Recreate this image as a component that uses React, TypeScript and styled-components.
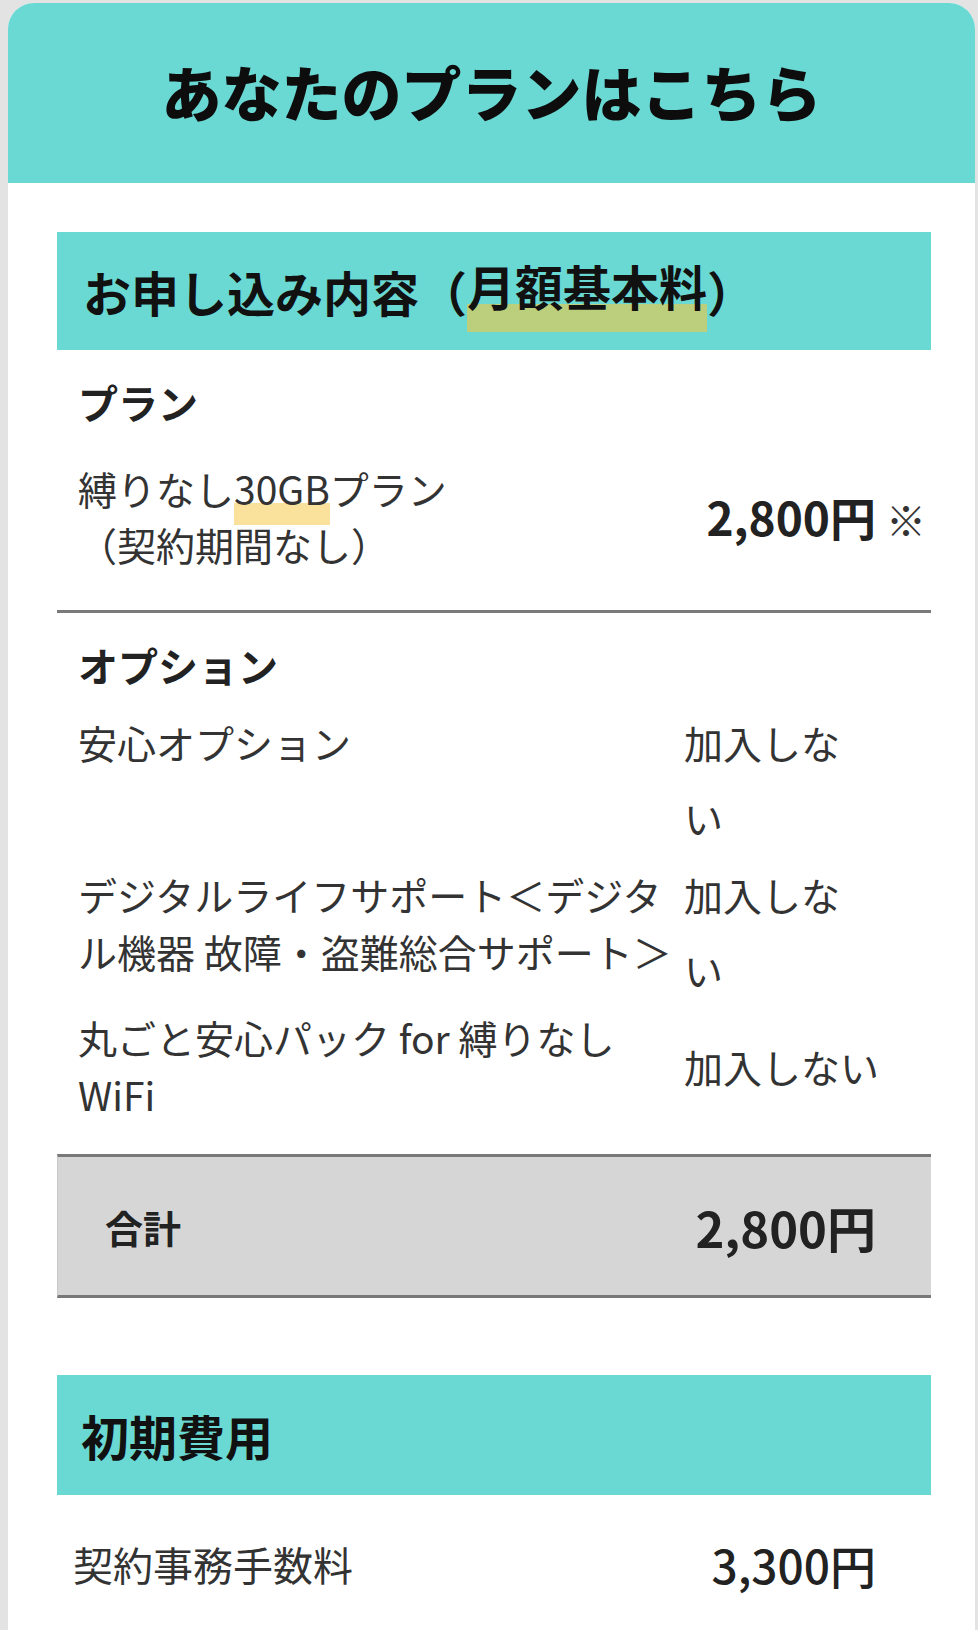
import styled, { createGlobalStyle } from "styled-components";

const GlobalStyle = createGlobalStyle`
  html, body {
    margin: 0;
    padding: 0;
    background: #e3e3e3;
  }
  body {
    font-family: "Noto Sans CJK JP", "Noto Sans", sans-serif;
    color: #1e1e1e;
  }
`;

const TEAL = "#6ad9d4";

const options = [
  { name: "安心オプション", value: "加入しない", narrow: true, center: false },
  {
    name: "デジタルライフサポート＜デジタル機器 故障・盗難総合サポート＞",
    value: "加入しない",
    narrow: true,
    center: false,
  },
  { name: "丸ごと安心パック for 縛りなしWiFi", value: "加入しない", narrow: false, center: true },
];

function App() {
  return (
    <>
      <GlobalStyle />
      <Card>
        <Hero>
          <h1>あなたのプランはこちら</h1>
        </Hero>

        <Body>
          <SectionHead>
            お申し込み内容（<Mark $onTeal>月額基本料</Mark>）
          </SectionHead>

          <Block $divider>
            <Label>プラン</Label>
            <PlanRow>
              <PlanName>
                縛りなし<Mark>30GB</Mark>プラン
                <br />
                （契約期間なし）
              </PlanName>
              <div>
                <Price>2,800円</Price>
                <Note>※</Note>
              </div>
            </PlanRow>
          </Block>

          <Block $options>
            <Label>オプション</Label>
            <OptionList>
              {options.map((opt) => (
                <OptionRow key={opt.name} $center={opt.center}>
                  <OptionName>{opt.name}</OptionName>
                  <OptionValue $narrow={opt.narrow}>{opt.value}</OptionValue>
                </OptionRow>
              ))}
            </OptionList>
          </Block>

          <Total>
            <TotalLabel>合計</TotalLabel>
            <TotalPrice>2,800円</TotalPrice>
          </Total>

          <SectionHead $spaced>初期費用</SectionHead>

          <FeeRow>
            <FeeName>契約事務手数料</FeeName>
            <FeePrice>3,300円</FeePrice>
          </FeeRow>
        </Body>
      </Card>
    </>
  );
}

const Card = styled.div`
  margin: 3px 3px 0 8px;
  min-height: 1627px;
  background: #fff;
  border-radius: 26px 26px 0 0;
  overflow: hidden;
`;

const Hero = styled.header`
  height: 180px;
  box-sizing: border-box;
  padding-bottom: 4px;
  background: ${TEAL};
  display: flex;
  align-items: center;
  justify-content: center;

  h1 {
    margin: 0;
    font-size: 60px;
    font-weight: 900;
    line-height: 1;
    color: #0d0d0d;
  }
`;

const Body = styled.div`
  padding: 49px 44px 0 49px;
`;

const SectionHead = styled.h2<{ $spaced?: boolean }>`
  margin: ${(p) => (p.$spaced ? "77px" : "0")} 0 0;
  height: ${(p) => (p.$spaced ? "120px" : "118px")};
  box-sizing: border-box;
  padding-left: ${(p) => (p.$spaced ? "24px" : "26px")};
  display: flex;
  align-items: center;
  background: ${TEAL};
  font-size: 48px;
  font-weight: 700;
  color: #111;
`;

const Mark = styled.span<{ $onTeal?: boolean }>`
  padding-bottom: 0.24em;
  background: linear-gradient(
    transparent 66%,
    ${(p) => (p.$onTeal ? "rgba(236, 200, 70, 0.62)" : "rgba(246, 206, 90, 0.6)")} 66%
  );
`;

const Block = styled.section<{ $divider?: boolean; $options?: boolean }>`
  padding: ${(p) => (p.$options ? "24px 0 31px 21px" : "24px 5px 38px 21px")};
  border-bottom: ${(p) => (p.$divider ? "3px solid #7a7a7a" : "none")};
`;

const Label = styled.div`
  font-size: 40px;
  font-weight: 700;
  line-height: 57px;
  color: #222;
`;

const PlanRow = styled.div`
  margin-top: 29px;
  display: flex;
  align-items: center;
  justify-content: space-between;
`;

const PlanName = styled.div`
  font-size: 39px;
  line-height: 56px;
  color: #333;
`;

const Price = styled.span`
  font-size: 46px;
  font-weight: 700;
  color: #222;
`;

const Note = styled.span`
  margin-left: 10px;
  font-size: 40px;
  color: #333;
`;

const OptionList = styled.div`
  margin-top: 11px;
  display: flex;
  flex-direction: column;
  gap: 2px;
`;

const OptionRow = styled.div<{ $center: boolean }>`
  display: grid;
  grid-template-columns: 606px 1fr;
  align-items: ${(p) => (p.$center ? "center" : "baseline")};
`;

const OptionName = styled.div`
  font-size: 39px;
  line-height: 57px;
  color: #333;
`;

const OptionValue = styled.div<{ $narrow: boolean }>`
  max-width: ${(p) => (p.$narrow ? "160px" : "none")};
  font-size: 39px;
  line-height: 75px;
  color: #333;
`;

const Total = styled.div`
  height: 144px;
  box-sizing: border-box;
  padding: 0 55px 0 47px;
  display: flex;
  align-items: center;
  justify-content: space-between;
  background: #d6d6d6;
  border-top: 3px solid #787878;
  border-bottom: 3px solid #787878;
  border-left: 1px solid #c9c9c9;
`;

const TotalLabel = styled.span`
  font-size: 38px;
  font-weight: 700;
  color: #222;
`;

const TotalPrice = styled.span`
  font-size: 49px;
  font-weight: 700;
  color: #222;
`;

const FeeRow = styled.div`
  padding: 36px 55px 0 16px;
  display: flex;
  align-items: center;
  justify-content: space-between;
`;

const FeeName = styled.span`
  font-size: 40px;
  line-height: 57px;
  color: #333;
`;

const FeePrice = styled.span`
  font-size: 46px;
  font-weight: 500;
  color: #222;
`;

export default App;
